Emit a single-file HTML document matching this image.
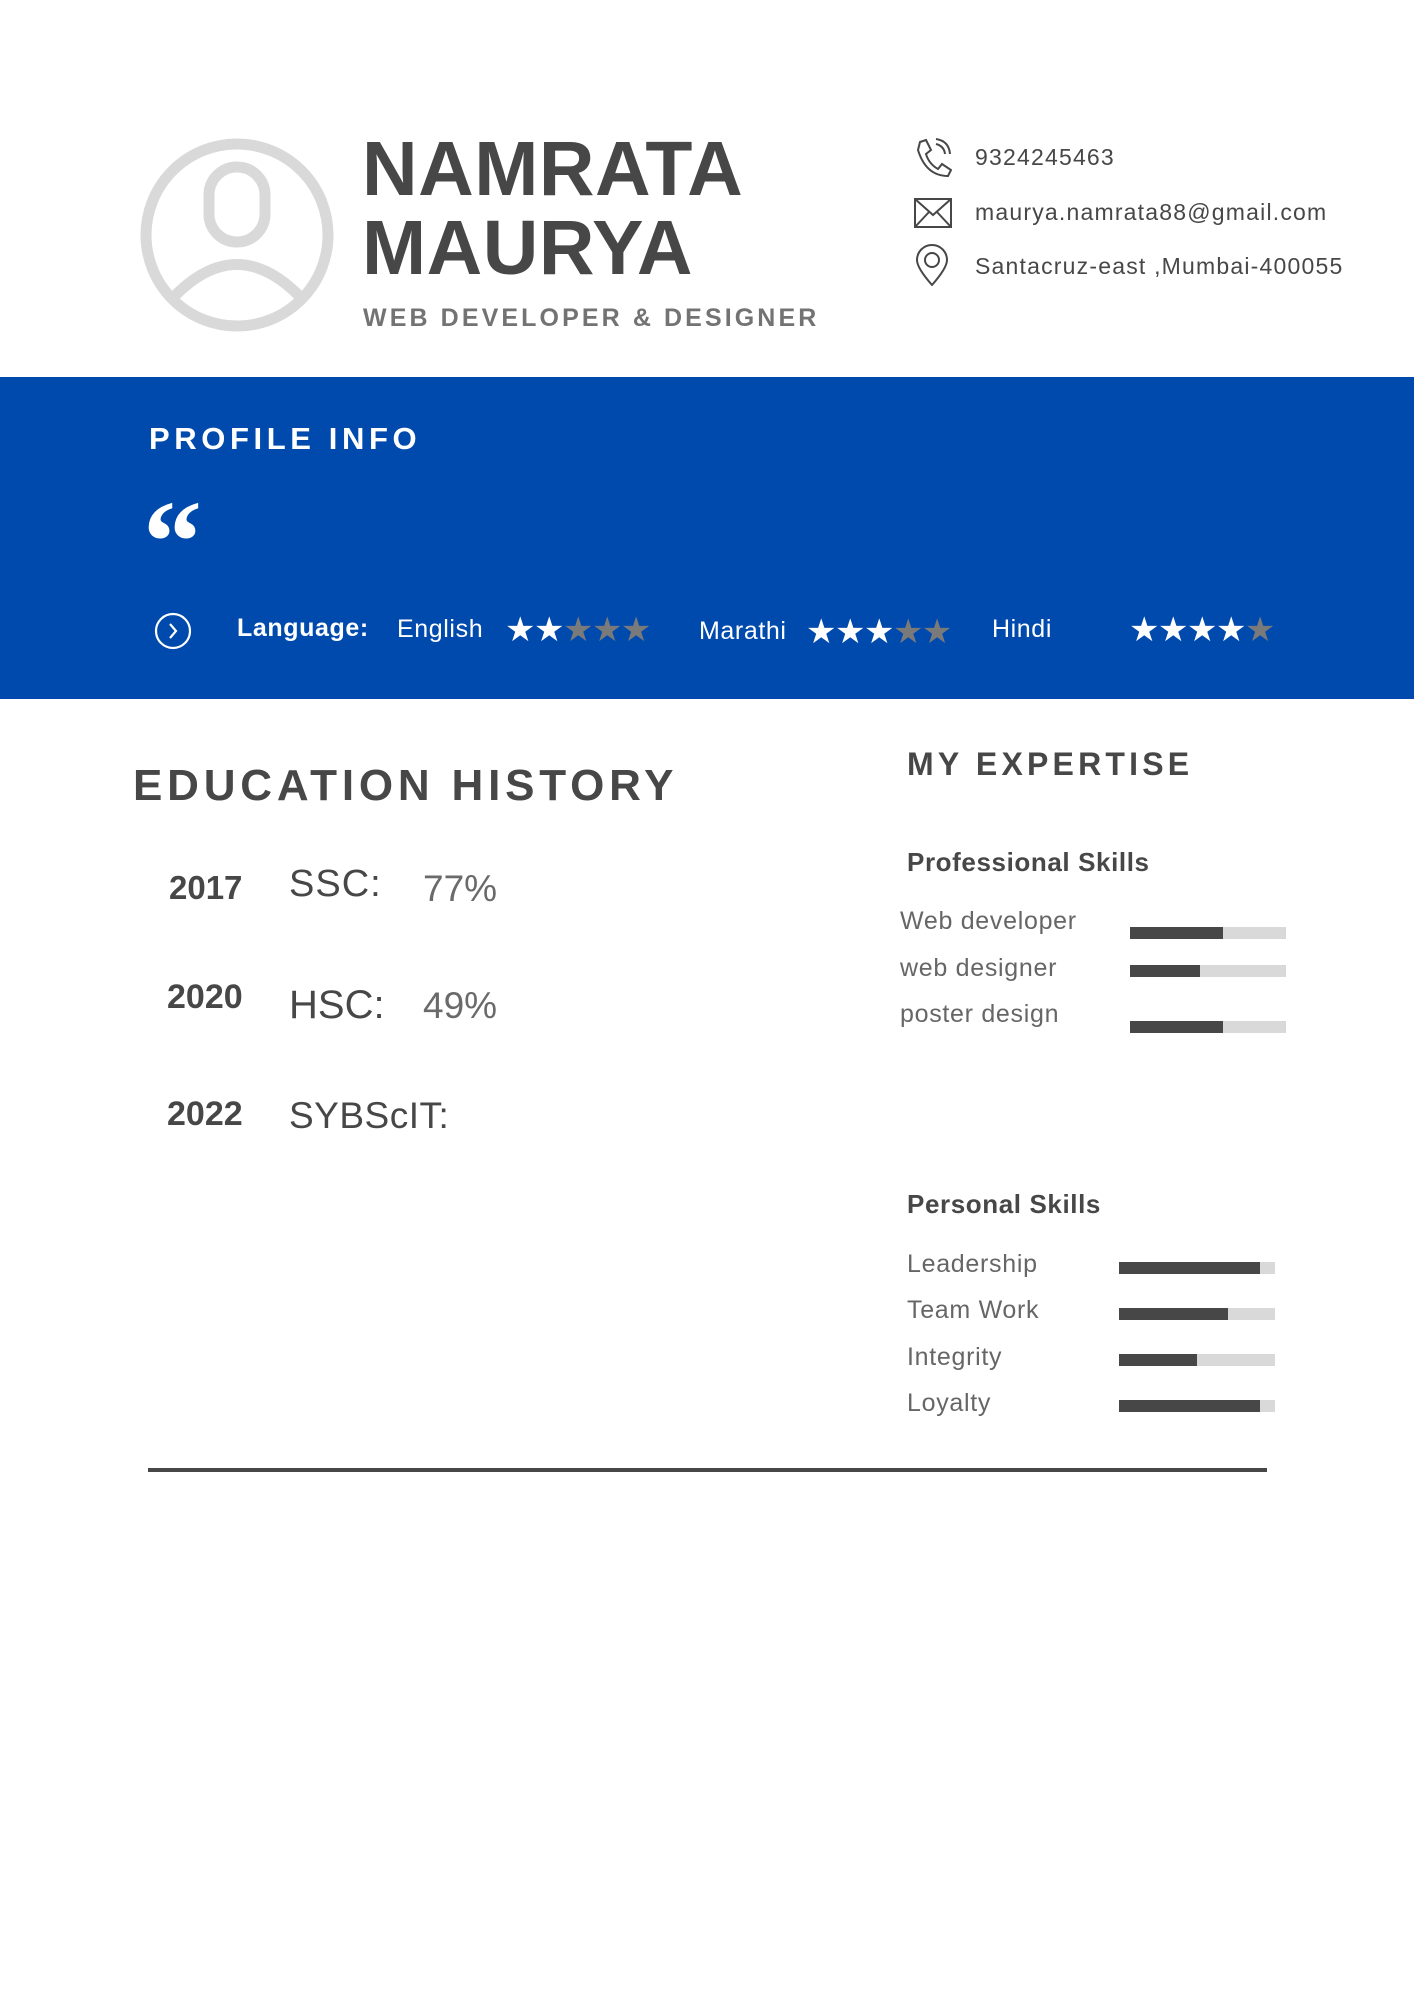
<!DOCTYPE html>
<html><head><meta charset="utf-8"><style>
*{margin:0;padding:0;box-sizing:border-box}
body{width:1414px;height:2000px;background:#fff;position:relative;font-family:"Liberation Sans",sans-serif;color:#474747;overflow:hidden}
.a{position:absolute;white-space:nowrap}
.b{font-weight:bold}
.bar{position:absolute;height:12px;background:#d9d9d9;width:156px}
.bar i{display:block;height:100%;background:#474747}
.s{font-size:25px;letter-spacing:0.7px;color:#666}
</style></head><body>
<svg class="a" style="left:139px;top:137px" width="196" height="196" viewBox="0 0 196 196">
<circle cx="98" cy="98" r="91" fill="none" stroke="#d9d9d9" stroke-width="11"/>
<rect x="70" y="30" width="56" height="75" rx="28" fill="none" stroke="#d9d9d9" stroke-width="11"/>
<path d="M30 165 Q98 90 166 165" fill="none" stroke="#d9d9d9" stroke-width="11"/>
</svg>
<div class="a b" style="left:362px;top:130px;font-size:77px;line-height:79px;letter-spacing:0.5px">NAMRATA<br>MAURYA</div>
<div class="a b" style="left:363px;top:304px;font-size:25px;letter-spacing:3.1px;color:#737373">WEB DEVELOPER &amp; DESIGNER</div>
<svg class="a" style="left:914px;top:138px" width="38" height="40" viewBox="0 0 38 40" fill="none" stroke="#474747" stroke-width="2">
<path d="M6 4 L12 2 L17 12 L12 16 Q15 26 24 31 L28 26 L37 32 L34 38 Q12 38 4 12 Z"/><path d="M22 6 Q30 8 31 16"/><path d="M22 1 Q35 3 36 16"/></svg>
<svg class="a" style="left:914px;top:198px" width="38" height="30" viewBox="0 0 38 30" fill="none" stroke="#474747" stroke-width="2">
<rect x="1" y="1" width="36" height="28"/><path d="M1 1 L19 17 L37 1 M1 29 L15 14 M37 29 L23 14"/></svg>
<svg class="a" style="left:915px;top:244px" width="34" height="42" viewBox="0 0 34 42" fill="none" stroke="#474747" stroke-width="2">
<path d="M17 41 Q2 24 2 16 A15 15 0 0 1 32 16 Q32 24 17 41 Z"/><circle cx="17" cy="16" r="7"/></svg>
<div class="a" style="left:975px;top:144px;font-size:23px;letter-spacing:1.2px">9324245463</div>
<div class="a" style="left:975px;top:199px;font-size:23px;letter-spacing:1.2px">maurya.namrata88@gmail.com</div>
<div class="a" style="left:975px;top:253px;font-size:23px;letter-spacing:1.2px">Santacruz-east ,Mumbai-400055</div>
<div class="a" style="left:0;top:377px;width:1414px;height:322px;background:#004aad"></div>
<div class="a b" style="left:149px;top:421px;font-size:31px;letter-spacing:4.6px;color:#fff">PROFILE INFO</div>
<div class="a b" style="left:143px;top:482px;font-size:118px;line-height:120px;color:#fff;font-family:'Liberation Serif',serif">“</div>
<svg class="a" style="left:154px;top:612px" width="38" height="38" viewBox="0 0 38 38" fill="none" stroke="#fff" stroke-width="2.2"><circle cx="19" cy="19" r="17"/><path d="M16 12 L22 19 L16 26"/></svg>
<div class="a b" style="left:237px;top:614px;font-size:25px;letter-spacing:0.6px;color:#fff">Language:</div>
<div class="a" style="left:397px;top:615px;font-size:25px;letter-spacing:0.6px;color:#fff">English</div>
<div class="a" style="left:505px;top:610px;font-size:34px;letter-spacing:-1.5px;color:#fff">★★<span style="color:#7a7a7a">★★★</span></div>
<div class="a" style="left:699px;top:617px;font-size:25px;letter-spacing:0.6px;color:#fff">Marathi</div>
<div class="a" style="left:806px;top:612px;font-size:34px;letter-spacing:-1.5px;color:#fff">★★★<span style="color:#7a7a7a">★★</span></div>
<div class="a" style="left:992px;top:615px;font-size:25px;letter-spacing:0.6px;color:#fff">Hindi</div>
<div class="a" style="left:1129px;top:610px;font-size:34px;letter-spacing:-1.5px;color:#fff">★★★★<span style="color:#7a7a7a">★</span></div>
<div class="a b" style="left:133px;top:761px;font-size:44px;letter-spacing:4.8px">EDUCATION HISTORY</div>
<div class="a b" style="left:169px;top:869px;font-size:33px">2017</div>
<div class="a" style="left:289px;top:863px;font-size:38px;letter-spacing:1px">SSC:</div>
<div class="a" style="left:423px;top:868px;font-size:37px;color:#6a6a6a">77%</div>
<div class="a b" style="left:167px;top:978px;font-size:34px">2020</div>
<div class="a" style="left:289px;top:983px;font-size:40px">HSC:</div>
<div class="a" style="left:423px;top:985px;font-size:37px;color:#6a6a6a">49%</div>
<div class="a b" style="left:167px;top:1095px;font-size:34px">2022</div>
<div class="a" style="left:289px;top:1095px;font-size:37px;letter-spacing:0.5px">SYBScIT:</div>
<div class="a b" style="left:907px;top:746px;font-size:32px;letter-spacing:4.2px">MY EXPERTISE</div>
<div class="a b" style="left:907px;top:847px;font-size:26px;letter-spacing:0.6px">Professional Skills</div>
<div class="a s" style="left:900px;top:907px">Web developer</div>
<div class="a s" style="left:900px;top:954px">web designer</div>
<div class="a s" style="left:900px;top:1000px">poster design</div>
<div class="bar" style="left:1130px;top:927px"><i style="width:93px"></i></div>
<div class="bar" style="left:1130px;top:965px"><i style="width:70px"></i></div>
<div class="bar" style="left:1130px;top:1021px"><i style="width:93px"></i></div>
<div class="a b" style="left:907px;top:1189px;font-size:26px;letter-spacing:0.6px">Personal Skills</div>
<div class="a s" style="left:907px;top:1250px">Leadership</div>
<div class="a s" style="left:907px;top:1296px">Team Work</div>
<div class="a s" style="left:907px;top:1343px">Integrity</div>
<div class="a s" style="left:907px;top:1389px">Loyalty</div>
<div class="bar" style="left:1119px;top:1262px"><i style="width:141px"></i></div>
<div class="bar" style="left:1119px;top:1308px"><i style="width:109px"></i></div>
<div class="bar" style="left:1119px;top:1354px"><i style="width:78px"></i></div>
<div class="bar" style="left:1119px;top:1400px"><i style="width:141px"></i></div>
<div class="a" style="left:148px;top:1468px;width:1119px;height:4px;background:#474747"></div>
</body></html>
